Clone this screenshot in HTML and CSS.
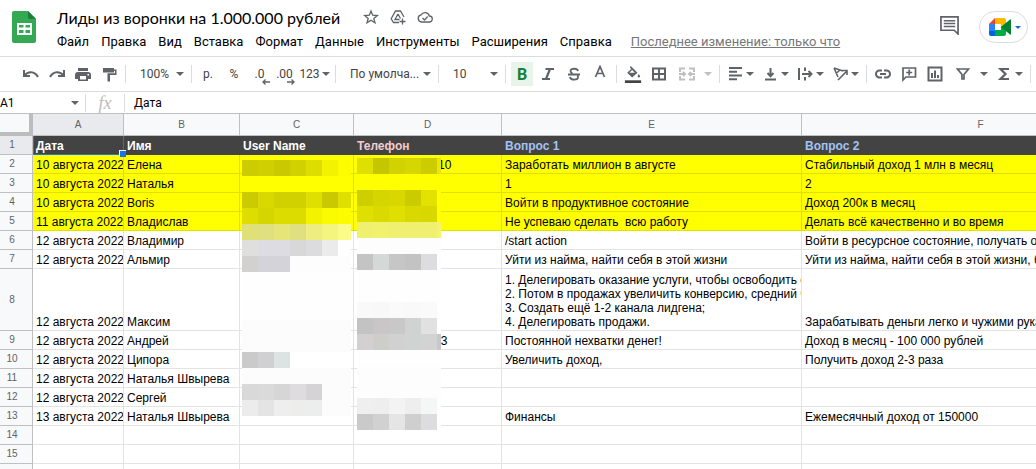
FILE: index.html
```html
<!DOCTYPE html>
<html lang="ru">
  <head>
    <meta charset="utf-8">
    <title>Лиды из воронки на 1.000.000 рублей</title>
    <link rel="stylesheet" href="styles.css">
  </head>
  <body>
    <!-- Шапка документа -->
    <header class="header">
      <svg class="logo" viewBox="0 0 24 32">
        <path d="M2 0h14l8 8v22a2 2 0 0 1-2 2H2a2 2 0 0 1-2-2V2a2 2 0 0 1 2-2z" fill="#34a853"/>
        <path d="M16 0l8 8h-6a2 2 0 0 1-2-2z" fill="#188038"/>
        <path d="M5 12h15v12H5zM7 14v2.500h4.500V14zM13.500 14v2.500H18V14zM7 19v3h4.500v-3zM13.500 19v3H18v-3z" fill="#fff" fill-rule="evenodd"/>
      </svg>
      <div class="document">
        <div class="title-row">
          <h1>Лиды из воронки на 1.000.000 рублей</h1>
          <button class="title-button" aria-label="Пометить"><svg viewBox="0 0 16 16"><path d="M8 2l1.700 4.200 4.600.3-3.500 2.900 1.200 4.400L8 11.300l-4 2.500 1.200-4.400L1.700 6.500l4.600-.3z"/></svg></button>
          <button class="title-button" aria-label="Добавить ярлык"><svg viewBox="0 0 16 16"><path d="M9 13.500H3.500L1.200 9.800 5.500 2h5l3.500 6M8 5L5 10.500h4.500M8 5l2.500 4.500M12.500 9.500v6M9.500 12.500h6"/></svg></button>
          <button class="title-button" aria-label="Сохранено"><svg viewBox="0 0 16 16"><path d="M4.500 13a3.600 3.600 0 0 1-.4-7.100A4.500 4.500 0 0 1 12.400 7a3 3 0 0 1-.2 6zM5.500 9l2 2 3.200-3.500"/></svg></button>
        </div>
        <nav class="menu">
          <button>Файл</button>
          <button>Правка</button>
          <button>Вид</button>
          <button>Вставка</button>
          <button>Формат</button>
          <button>Данные</button>
          <button>Инструменты</button>
          <button>Расширения</button>
          <button>Справка</button>
          <a href="#">Последнее изменение: только что</a>
        </nav>
      </div>
      <button class="comments" aria-label="Комментарии">
        <svg viewBox="0 0 20 20"><path d="M1 1h18v18l-4-4H1z" fill="none" stroke="#5f6368" stroke-width="1.800"/><path d="M4 5h12M4 8h12M4 11h12" stroke="#5f6368" stroke-width="1.600"/></svg>
      </button>
      <button class="meet" aria-label="Видеовстреча">
        <svg class="meet-logo" viewBox="0 0 22 18">
          <path d="M6 0v6H0z" fill="#ea4335"/>
          <path d="M0 6h6v7H0z" fill="#2684fc"/>
          <path d="M0 13h6v5H2a2 2 0 0 1-2-2z" fill="#0066da"/>
          <path d="M6 0h9a2 2 0 0 1 2 2v5l-5 3V6H6z" fill="#ffba00"/>
          <path d="M6 12h6V9l5-3v10a2 2 0 0 1-2 2H6z" fill="#00ac47"/>
          <path d="M12 9l9-7.500a.6.6 0 0 1 1 .5v14a.6.6 0 0 1-1 .5z" fill="#00832d"/>
        </svg>
        <span class="caret"></span>
      </button>
    </header>

    <!-- Панель инструментов -->
    <div class="toolbar">
      <button aria-label="Отменить"><svg viewBox="0 0 18 18"><path d="M2 5v6h6M2.500 10.500C6 6 12.500 6 16 12"/></svg></button>
      <button aria-label="Повторить"><svg viewBox="0 0 18 18"><path d="M16 5v6h-6M15.500 10.500C12 6 5.500 6 2 12"/></svg></button>
      <button aria-label="Печать"><svg class="filled" viewBox="0 0 18 18"><path d="M4 3h10v3H4zM4 7h10a3 3 0 0 1 3 3v4h-3v2H4v-2H1v-4a3 3 0 0 1 3-3zM6 11v3.500h6V11zM13.500 9v1.500H15V9z" fill-rule="evenodd"/></svg></button>
      <button aria-label="Копировать форматирование"><svg class="filled" viewBox="0 0 18 18"><path d="M3 3h11v1.500h2.500V10H10v6.500H7.500V8.300H15V6h-1v1.500H3z"/></svg></button>
      <span class="separator"></span>
      <button class="select zoom">100%<span class="caret"></span></button>
      <span class="separator"></span>
      <button>р.</button>
      <button>%</button>
      <button class="decimal">.0<svg viewBox="0 0 8 6"><path d="M8 3H1M3.500.5L1 3l2.500 2.500"/></svg></button>
      <button class="decimal">.00<svg viewBox="0 0 8 6"><path d="M0 3h7M4.500.5L7 3 4.500 5.500"/></svg></button>
      <button class="formats">123<span class="caret"></span></button>
      <span class="separator"></span>
      <button class="select font">По умолча...<span class="caret"></span></button>
      <span class="separator"></span>
      <button class="select size">10<span class="caret"></span></button>
      <span class="separator"></span>
      <button class="active" aria-label="Полужирный"><b>B</b></button>
      <button aria-label="Курсив"><svg viewBox="0 0 18 18"><path d="M6.500 4H15M3 14h8M11 4L7 14" stroke-width="2.200"/></svg></button>
      <button aria-label="Зачеркнутый"><svg viewBox="0 0 18 18"><path d="M3 9.500h12M13 6c-.5-3-7.500-3-7.500 0 0 1.500 1 2 2 2.500M5 12c.5 3.500 8 3.500 8 0 0-.8-.2-1.200-.6-1.600" stroke-width="1.800"/></svg></button>
      <button aria-label="Цвет текста"><svg viewBox="0 0 18 18"><path d="M4.500 12L9 1.500l4.500 10.500M6 8.500h6" stroke-width="1.700"/></svg></button>
      <span class="separator"></span>
      <button aria-label="Цвет заливки"><svg class="filled" viewBox="0 0 18 20"><path d="M6.500 1l7.500 7.500-6 5.500-5.500-5.500 4.500-4-1.500-2zM8 5.500l-3 3h6zM15.500 10c2 2.500 1.500 4 0 4s-2-1.500 0-4z" fill-rule="evenodd"/><path d="M0 17h18v3H0z" fill="#434343"/></svg></button>
      <button aria-label="Границы"><svg viewBox="0 0 18 18"><path d="M3 3.500h12v11H3zM9 3.500v11M3 9h12"/></svg></button>
      <button class="dropdown wide" disabled aria-label="Объединить"><svg viewBox="0 0 18 18"><path d="M7 3.500H2V7M11 3.500h5V7M7 14.500H2V11M11 14.500h5V11M1 9h6M5 7l2 2-2 2M17 9h-6M13 7l-2 2 2 2"/></svg><span class="caret"></span></button>
      <span class="separator"></span>
      <button class="dropdown" aria-label="Выравнивание"><svg viewBox="0 0 18 18"><path d="M3 3h13M3 6.700h8M3 10.500h13M3 14.200h8"/></svg><span class="caret"></span></button>
      <button class="dropdown" aria-label="По вертикали"><svg viewBox="0 0 18 18"><path d="M4 14.500h11M9.500 3v8M6.500 8l3 3.200 3-3.200"/></svg><span class="caret"></span></button>
      <button class="dropdown" aria-label="Перенос текста"><svg viewBox="0 0 18 18"><path d="M3 3v12M9 2.500v3.500M9 12v3.500M6 9h9M12.500 6l3 3-3 3"/></svg><span class="caret"></span></button>
      <button class="dropdown" aria-label="Поворот текста"><svg viewBox="0 0 18 18"><path d="M3 3l4 9M3 3l9 3M5 8.500L9 5M7 15l9-9M11.500 5.500H16V10" stroke-width="1.600"/></svg><span class="caret"></span></button>
      <span class="separator"></span>
      <button aria-label="Ссылка"><svg viewBox="0 0 18 18"><path d="M8 5.500H5.500a3.500 3.500 0 0 0 0 7H8M10 5.500h2.500a3.500 3.500 0 0 1 0 7H10M6 9h6"/></svg></button>
      <button aria-label="Комментарий"><svg viewBox="0 0 18 18"><path d="M3 3h12.500v9H6l-3 3zM9.200 4.500v6M6.200 7.500h6" stroke-width="1.700"/></svg></button>
      <button aria-label="Диаграмма"><svg viewBox="0 0 18 18"><path d="M2.500 2.500h13v13h-13zM6 8v5M9 5.500V13M12 10v3"/></svg></button>
      <button class="dropdown wide" aria-label="Фильтр"><svg viewBox="0 0 18 18"><path d="M3.500 4h11L10 9.500V14H8V9.500z" stroke-width="1.700"/></svg><span class="caret"></span></button>
      <button class="dropdown" aria-label="Функции"><svg viewBox="0 0 18 18"><path d="M14 4H5.500l5 5-5 5H14" stroke-width="2.200"/></svg><span class="caret"></span></button>
      <span class="separator"></span>
    </div>

    <!-- Строка формул -->
    <div class="formula-bar">
      <button class="cell-name">A1<span class="caret"></span></button>
      <label class="fx" for="formula">fx</label>
      <input id="formula" type="text" value="Дата">
    </div>

    <!-- Таблица -->
    <main class="sheet">
      <table>
        <colgroup>
          <col class="col-number"><col class="col-a"><col class="col-b"><col class="col-c"><col class="col-d"><col class="col-e"><col class="col-f">
        </colgroup>
        <thead>
          <tr><th class="corner"></th><th class="selected">A</th><th>B</th><th>C</th><th>D</th><th>E</th><th>F</th></tr>
        </thead>
        <tbody>
          <tr class="names"><th class="selected">1</th><td class="current">Дата<span class="handle"></span></td><td>Имя</td><td>User Name</td><td class="pink">Телефон</td><td class="blue">Вопрос 1</td><td class="blue">Вопрос 2</td></tr>
          <tr class="yellow"><th>2</th><td class="date">10 августа 2022</td><td>Елена</td><td></td><td class="phone">-10</td><td>Заработать миллион в августе</td><td>Стабильный доход 1 млн в месяц</td></tr>
          <tr class="yellow"><th>3</th><td class="date">10 августа 2022</td><td>Наталья</td><td></td><td></td><td>1</td><td>2</td></tr>
          <tr class="yellow"><th>4</th><td class="date">10 августа 2022</td><td>Boris</td><td></td><td></td><td>Войти в продуктивное состояние</td><td>Доход 200к в месяц</td></tr>
          <tr class="yellow"><th>5</th><td class="date">11 августа 2022</td><td>Владислав</td><td></td><td></td><td>Не успеваю сделать  всю работу</td><td>Делать всё качественно и во время</td></tr>
          <tr><th>6</th><td class="date">12 августа 2022</td><td>Владимир</td><td></td><td></td><td>/start action</td><td>Войти в ресурсное состояние, получать от жизни</td></tr>
          <tr><th>7</th><td class="date">12 августа 2022</td><td>Альмир</td><td></td><td></td><td>Уйти из найма, найти себя в этой жизни</td><td>Уйти из найма, найти себя в этой жизни, быть</td></tr>
          <tr class="tall"><th>8</th><td class="date">12 августа 2022</td><td>Максим</td><td></td><td></td><td>1. Делегировать оказание услуги, чтобы освободить свое<br>2. Потом в продажах увеличить конверсию, средний чек<br>3. Создать ещё 1-2 канала лидгена;<br>4. Делегировать продажи.</td><td>Зарабатывать деньги легко и чужими руками</td></tr>
          <tr><th>9</th><td class="date">12 августа 2022</td><td>Андрей</td><td></td><td class="phone">13</td><td>Постоянной нехватки денег!</td><td>Доход в месяц - 100 000 рублей</td></tr>
          <tr><th>10</th><td class="date">12 августа 2022</td><td>Ципора</td><td></td><td></td><td>Увеличить доход,</td><td>Получить доход 2-3 раза</td></tr>
          <tr><th>11</th><td class="date">12 августа 2022</td><td>Наталья Швырева</td><td></td><td></td><td></td><td></td></tr>
          <tr><th>12</th><td class="date">12 августа 2022</td><td>Сергей</td><td></td><td></td><td></td><td></td></tr>
          <tr><th>13</th><td class="date">13 августа 2022</td><td>Наталья Швырева</td><td></td><td></td><td>Финансы</td><td>Ежемесячный доход от 150000</td></tr>
          <tr><th>14</th><td></td><td></td><td></td><td></td><td></td><td></td></tr>
          <tr><th>15</th><td></td><td></td><td></td><td></td><td></td><td></td></tr>
          <tr><th></th><td></td><td></td><td></td><td></td><td></td><td></td></tr>
        </tbody>
      </table>
      <!-- Скрытые личные данные -->
      <div class="mosaic mosaic-user" id="mosaic-user"></div>
      <div class="mosaic mosaic-phone" id="mosaic-phone"></div>
    </main>
    <script src="script.js"></script>
  </body>
</html>
```
FILE: styles.css
```css
* {
  box-sizing: border-box;
}

body {
  margin: 0;
  height: 100vh;
  overflow: hidden;
  background: #fff;
  color: #000;
  font-family: Roboto, sans-serif;
  font-size: 13px;
}

button {
  padding: 0;
  border: 0;
  background: none;
  color: inherit;
  font: inherit;
  white-space: nowrap;
}

.caret {
  flex: none;
  border: 4px solid transparent;
  border-top-color: #5f6368;
  border-bottom: 0;
}

/* Шапка */
.header {
  display: flex;
  align-items: flex-start;
  height: 57px;
  padding: 11px 8px 0 12px;
  border-bottom: 1px solid #dadce0;
}

.logo {
  flex: none;
  width: 24px;
  height: 32px;
  margin-right: 21px;
}

.document {
  flex: 1;
  min-width: 0;
  margin-top: -6px;
}

.title-row {
  display: flex;
  align-items: center;
  gap: 11px;
  height: 24px;
}

h1 {
  margin: 0 12px 0 0;
  font-family: Lato, sans-serif;
  font-size: 16px;
  font-weight: normal;
  white-space: nowrap;
}

.title-button svg {
  display: block;
  width: 16px;
  height: 16px;
  fill: none;
  stroke: #5f6368;
  stroke-width: 1.3;
}

.menu {
  display: flex;
  gap: 12px;
  margin-top: 4px;
  line-height: 18px;
  white-space: nowrap;
}

.menu a {
  margin-left: 7px;
  color: #777;
}

.comments {
  margin: 5px 20px 0 0;
}

.comments svg {
  display: block;
  width: 19px;
  height: 19px;
}

.meet {
  display: flex;
  align-items: center;
  gap: 4px;
  width: 49px;
  height: 32px;
  padding-left: 9px;
  border: 1px solid #dadce0;
  border-radius: 16px;
}

.meet-logo {
  width: 22px;
  height: 18px;
}

.meet .caret {
  border-width: 3px;
  border-top-color: #1967d2;
  border-bottom: 0;
}

/* Панель инструментов */
.toolbar {
  display: flex;
  align-items: center;
  height: 35px;
  padding-left: 18px;
  border-bottom: 1px solid #dadce0;
  color: #444;
  font-size: 12px;
}

.toolbar button {
  display: flex;
  flex: none;
  align-items: center;
  justify-content: center;
  width: 26px;
  height: 24px;
}

.toolbar svg {
  flex: none;
  width: 18px;
  height: 18px;
  fill: none;
  stroke: #5f6368;
  stroke-width: 2;
}

.toolbar .filled {
  fill: #5f6368;
  stroke: none;
}

.separator {
  flex: none;
  width: 1px;
  height: 18px;
  margin: 0 3px;
  background: #dadce0;
}

.toolbar .select {
  justify-content: space-between;
  padding: 0 4px 0 11px;
}

.toolbar .zoom {
  width: 59px;
}

.toolbar .font {
  width: 96px;
}

.toolbar .size {
  width: 60px;
}

.toolbar .formats {
  gap: 2px;
  width: 35px;
}

.toolbar .decimal {
  position: relative;
  width: 25px;
}

.decimal svg {
  position: absolute;
  right: 2px;
  bottom: 1px;
  width: 8px;
  height: 6px;
  stroke-width: 1.3;
}

.toolbar .active {
  background: #e6f4ea;
  background-clip: content-box;
  padding: 0 2px;
  color: #188038;
  font-size: 16px;
}

.toolbar .dropdown {
  justify-content: flex-start;
  gap: 2px;
  width: 35px;
  padding-left: 3px;
}

.toolbar .wide {
  gap: 8px;
  width: 44px;
  padding-left: 6px;
}

.toolbar button:disabled {
  opacity: 0.4;
}

/* Строка формул */
.formula-bar {
  display: flex;
  align-items: center;
  height: 21px;
}

.cell-name {
  display: flex;
  align-items: center;
  justify-content: space-between;
  width: 86px;
  height: 18px;
  padding-right: 6px;
  border-right: 1px solid #dadce0;
}

.cell-name,
#formula {
  font-family: Roboto, sans-serif;
  font-size: 12px;
}

.fx {
  width: 39px;
  border-right: 1px solid #dadce0;
  color: #bbb;
  font-family: "Liberation Serif", serif;
  font-size: 18px;
  font-style: italic;
  line-height: 18px;
  text-align: center;
}

#formula {
  flex: 1;
  padding: 0 9px;
  border: 0;
  outline: 0;
}

/* Таблица */
.sheet {
  position: relative;
  overflow: hidden;
  border-top: 1px solid #c0c0c0;
}

table {
  width: 1160px;
  table-layout: fixed;
  border-spacing: 0;
  font-family: "Liberation Sans", Arial, sans-serif;
  font-size: 12px;
  line-height: 14px;
}

.col-number {
  width: 33px;
}

.col-a {
  width: 91px;
}

.col-b {
  width: 116px;
}

.col-c {
  width: 114px;
}

.col-d {
  width: 148px;
}

.col-e {
  width: 300px;
}

th {
  height: 19px;
  padding: 0;
  border: solid #c0c0c0;
  border-width: 0 1px 1px 0;
  background: #f8f9fa;
  color: #5f6368;
  font-size: 10px;
  font-weight: normal;
}

thead th {
  height: 22px;
}

tbody th {
  padding-right: 8px;
}

th.selected {
  background: #e8eaed;
}

th.corner {
  border: solid #bdbdbd;
  border-width: 0 4px 4px 0;
}

td {
  height: 19px;
  padding: 3px 3px 1px;
  overflow: hidden;
  border: solid #e2e3e3;
  border-width: 0 1px 1px 0;
  vertical-align: bottom;
  white-space: pre;
}

.names td {
  border-color: #434343;
  background: #434343;
  color: #fff;
  font-weight: bold;
}

.names .pink {
  color: #f4cccc;
}

.names .blue {
  color: #a4c2f4;
}

.yellow td {
  border-color: #e1e100;
  background: #ff0;
}

.tall td {
  height: 62px;
}

.date {
  padding-right: 0;
  text-align: right;
}

.phone {
  padding-left: 80px;
}

.names .current {
  position: relative;
  overflow: visible;
  border-color: #1a73e8;
  box-shadow: inset 1px 0 #1a73e8;
}

.handle {
  position: absolute;
  right: -3px;
  bottom: -3px;
  width: 7px;
  height: 7px;
  border: solid #fff;
  border-width: 1px 0 0 1px;
  background: #1a73e8;
}

/* Мозаика поверх личных данных */
.mosaic {
  position: absolute;
  display: grid;
  grid-auto-rows: 16px;
}

.mosaic-user {
  top: 46px;
  left: 242px;
  grid-template-columns: repeat(6, 16px) 13px;
}

.mosaic-phone {
  top: 44px;
  left: 357px;
  grid-template-columns: repeat(5, 16px) 4px;
}
```
FILE: script.js
```js
// Цвета клеток мозаики по строкам, последний цвет повторяется до конца строки
const userColors = [
  "cccc00 d0d000 c9c900 d1d100 dddd00 f3f300 fdfd00",
  "ffff00",
  "cbcb00 d9d900 d1d100 d1d100 dfdf00 c9c900 dfdf00",
  "dddd00 d5d500 dcdc00 dcdc00 f3f300 fafa00 fdfd00",
  "e0e078 e0e080 e6e678 e0e080 eeee80 f4f480 fbfb88",
  "dfdfdd dcdce2 dcdce2 d8d8d8 dcdcde ebebeb fefefe",
  "d3d1cf d4d3da d4d3da fdfdfd",
  "fefefe",
  "fefefe",
  "fefefe",
  "fcfcfc",
  "fcfcfc",
  "cacaca d0d0d2 dde2e3 ffffff",
  "fcfcfc",
  "d9d9d9 dadada d6d6d6 dedcde d5d3d6 fcfcfc",
  "ececec e4e4e4 eeeeee ededeb eceeed fcfcfc"
];

const phoneColors = [
  "dfdf00 c6c600 d2d200 d6d600 cccc00 e8e800",
  "ffff00",
  "cfcf00 d5d500 d8d800 cbcb00 e2e200 ffff00",
  "e0e000 dada00 dfdf00 d9d900 d8d800 ffff00",
  "f0f070 f1f170 f0f070 f0f070 f0f070 f4f470",
  "fdfdfd",
  "c4c4c4 d4d8d7 c6c6c6 c3c3c3 dddddf fdfdfd",
  "fefefe",
  "fefefe",
  "f9f9f9 f8f8f8 fafafa f9f9f9 fafafa ffffff",
  "c3c3c3 c8c6c6 c8c8c8 d0d3d1 e1e1e1 ffffff",
  "d3d0d1 cdcdc9 d1d1d1 d0d3d1 d3d3d3 c9c8c9",
  "fefefe",
  "fdfdfd",
  "fdfdfd",
  "efefef eeeeee f3f3f3 eeeeee f5f7f6 fefefe",
  "cacaca d1d1d1 e5e5e5 cfcfcf dddddf ffffff"
];

function drawMosaic(id, rows, columns) {
  const mosaic = document.getElementById(id);
  for (const row of rows) {
    const colors = row.split(" ");
    for (let i = 0; i < columns; i++) {
      const tile = document.createElement("span");
      tile.style.backgroundColor = "#" + (colors[i] || colors[colors.length - 1]);
      mosaic.appendChild(tile);
    }
  }
}

drawMosaic("mosaic-user", userColors, 7);
drawMosaic("mosaic-phone", phoneColors, 6);
```
